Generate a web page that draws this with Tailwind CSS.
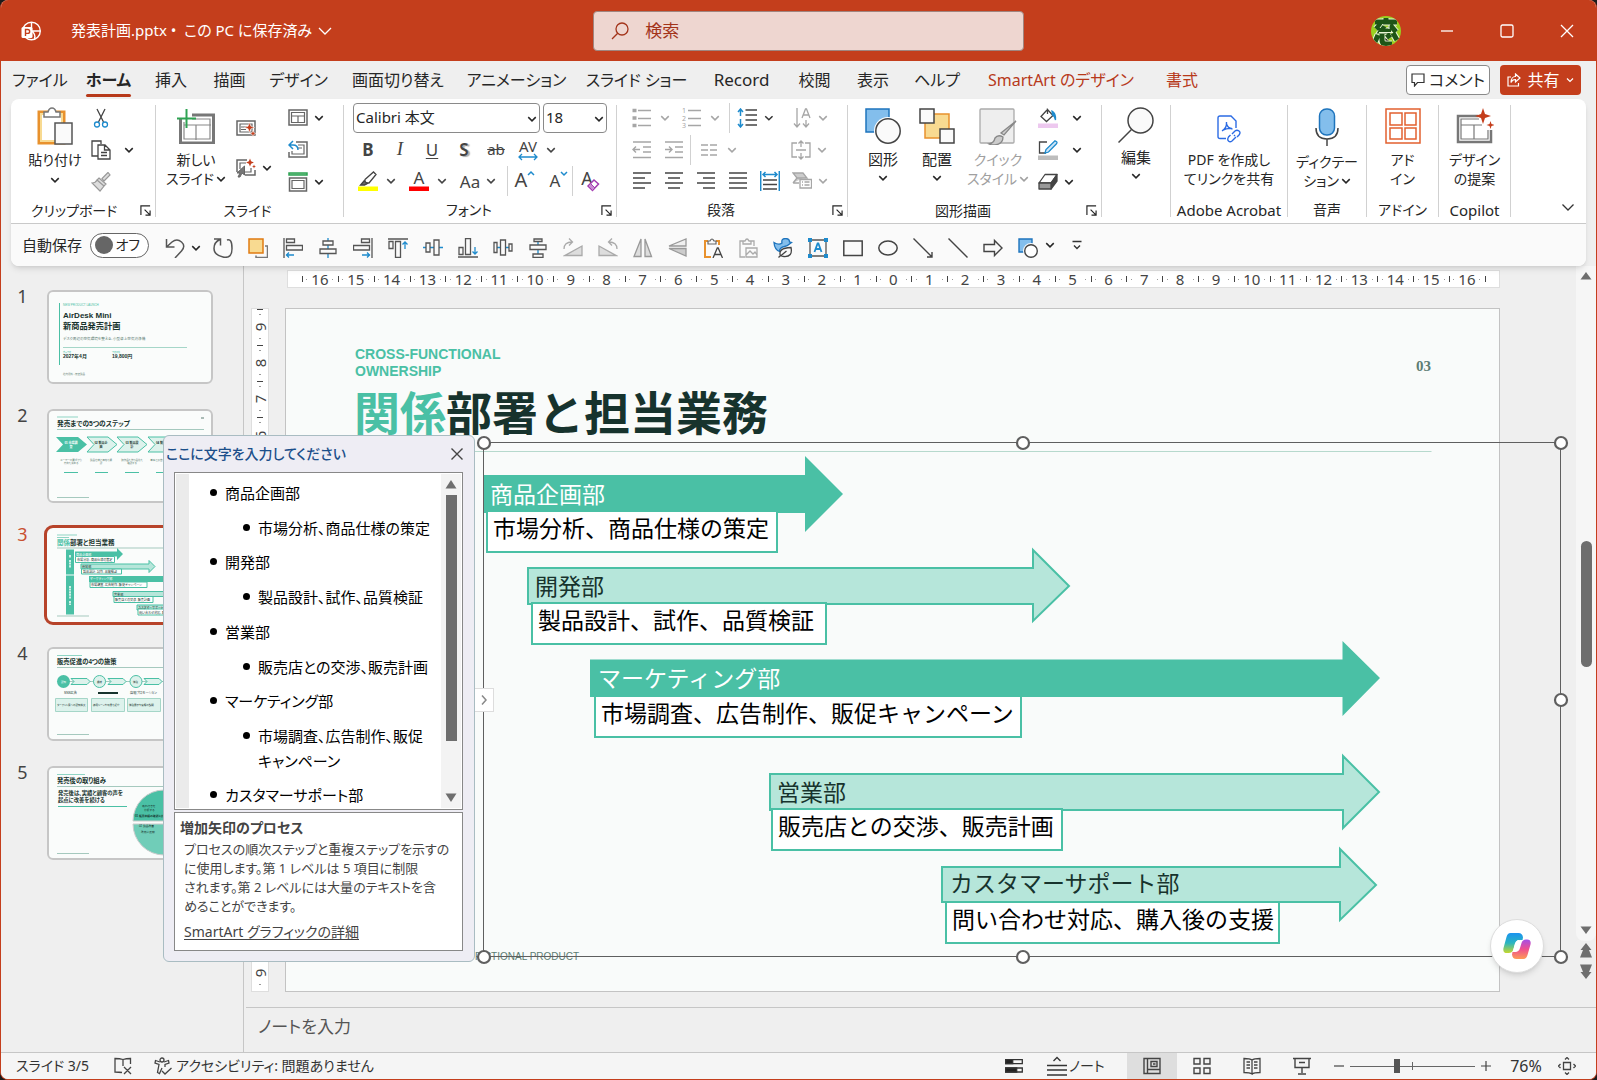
<!DOCTYPE html>
<html lang="ja">
<head>
<meta charset="utf-8">
<title>発表計画.pptx - PowerPoint</title>
<script src="https://cdn.jsdelivr.net/npm/@tailwindcss/browser@4"></script>
</head>
<body class="h-screen overflow-hidden bg-[#1b1b1b] font-['Noto_Sans','Noto_Sans_CJK_JP',sans-serif] text-[15px] text-[#262626] [font-feature-settings:'palt']">

<svg class="hidden">
  <symbol id="chev" viewBox="0 0 8 8"><path d="M1 2.500 4 5.500 7 2.500" fill="none" stroke="currentColor" stroke-width="1.2"/></symbol>
  <symbol id="launch" viewBox="0 0 12 12"><path d="M1 11V1h10M5 5l5.500 5.500M11 6v5H6" fill="none" stroke="currentColor" stroke-width="1.3"/></symbol>
</svg>

<div class="flex h-full flex-col overflow-hidden rounded-lg border-x border-b border-[#c43e1c] bg-[#efefef]">

  <!-- Title bar -->
  <header class="flex h-[61px] shrink-0 items-center bg-[#c43e1c] text-white">
    <div class="flex w-[37%] shrink-0 items-center">
      <svg class="ml-5 size-5" viewBox="0 0 20 20" fill="none" stroke="#fff" stroke-width="1.4"><circle cx="10.500" cy="10" r="8.800"/><path d="M10.500 1.200v8.800h8.800M10.500 10c3 2 4 5 3 8"/><rect x="0.500" y="6" width="11" height="11" rx="1.500" fill="#fff" stroke="none"/><path d="M4.500 15V8.500h2.200a1.900 1.900 0 0 1 0 3.900H4.500" stroke="#c43e1c"/></svg>
      <button class="ml-[30px] flex items-center gap-1.5 whitespace-nowrap">発表計画.pptx&nbsp;•&nbsp; この PC に保存済み
        <svg class="h-3 w-3.5" viewBox="0 0 14 12" fill="none" stroke="#fff" stroke-width="1.300"><path d="M1 3l6 6 6-6"/></svg></button>
    </div>
    <label class="ml-0.5 flex h-10 w-[27%] items-center rounded-[4px] border border-[#a0857f] bg-[#eed6d0] pl-[17px]">
      <svg class="size-[18px]" viewBox="0 0 18 18" fill="none" stroke="#a3341a" stroke-width="1.300"><circle cx="11" cy="7" r="6"/><path d="M6.700 11.300 1 17"/></svg>
      <input type="search" aria-label="検索" placeholder="検索" class="ml-4 min-w-0 flex-1 bg-transparent text-[17px] outline-none placeholder:text-[#a3341a]">
    </label>
    <div class="ml-auto flex items-center pr-3.5">
      <svg class="size-[30px]" viewBox="0 0 30 30"><defs><clipPath id="av"><circle cx="15" cy="15" r="15"/></clipPath></defs><g clip-path="url(#av)"><path d="M0 0h30v30H0z" fill="#9ad021"/><path d="M4 6h22M15 2v4M10 8l-5 5M13 10l-3 5h10M19 9l6 7M7 19l-3 7M11 18v6q0 4 4 4h6M16 18l3 4M22 17l4 7" stroke="#e9f5d6" stroke-width="7"/><path d="M4 6h22M15 2v4M10 8l-5 5M13 10l-3 5h10M19 9l6 7M7 19l-3 7M11 18v6q0 4 4 4h6M16 18l3 4M22 17l4 7" stroke="#1e5517" stroke-width="5" fill="none"/><path d="M8 16.500h14M12 8l-3 4M18 9v4" stroke="#e9f5d6" fill="none"/></g></svg>
      <button aria-label="最小化" class="ml-[31px] flex w-[30px] justify-center"><svg class="size-3.5" viewBox="0 0 14 14" stroke="#fff" stroke-width="1.300"><path d="M1 7h12"/></svg></button>
      <button aria-label="最大化" class="ml-[30px] flex w-[30px] justify-center"><svg class="size-3.5" viewBox="0 0 14 14" fill="none" stroke="#fff" stroke-width="1.300"><rect x="1" y="1" width="12" height="12" rx="1.500"/></svg></button>
      <button aria-label="閉じる" class="ml-[30px] flex w-[30px] justify-center"><svg class="size-3.5" viewBox="0 0 14 14" stroke="#fff" stroke-width="1.300"><path d="M1 1l12 12M13 1 1 13"/></svg></button>
    </div>
  </header>

  <!-- Ribbon tabs -->
  <nav class="flex h-[38px] shrink-0 items-center whitespace-nowrap pl-1 text-base">
    <button class="flex w-[70px] justify-center">ファイル</button>
    <button class="flex w-[67px] justify-center font-bold"><span class="relative">ホーム<span class="absolute inset-x-0 -bottom-[5px] h-[3px] rounded bg-[#b7391a]"></span></span></button>
    <button class="flex w-[58px] justify-center">挿入</button>
    <button class="flex w-[59px] justify-center">描画</button>
    <button class="flex w-[79px] justify-center">デザイン</button>
    <button class="flex w-[120px] justify-center">画面切り替え</button>
    <button class="flex w-[117px] justify-center">アニメーション</button>
    <button class="flex w-[123px] justify-center">スライド ショー</button>
    <button class="flex w-[87px] justify-center text-[17px]">Record</button>
    <button class="flex w-[59px] justify-center">校閲</button>
    <button class="flex w-[58px] justify-center">表示</button>
    <button class="flex w-[70px] justify-center">ヘルプ</button>
    <button class="flex w-[178px] justify-center text-[#b7391a]">SmartArt のデザイン</button>
    <button class="flex w-16 justify-center text-[#b7391a]">書式</button>
    <div class="ml-auto flex gap-2.5 pr-[15px]">
      <button class="flex h-[30px] w-[84px] items-center justify-center gap-1 rounded-[4px] border border-[#8a8a8a] bg-white"><svg class="size-3.5" viewBox="0 0 14 14" fill="none" stroke="#333" stroke-width="1.200"><path d="M1 1h12v8.500H6.500L3.500 13V9.500H1z"/></svg>コメント</button>
      <button class="flex h-[30px] w-[81px] items-center justify-center gap-1.5 rounded-[4px] bg-[#c43e1c] text-white"><svg class="size-3.5" viewBox="0 0 14 14" fill="none" stroke="#fff" stroke-width="1.200"><path d="M4 4H1v9h10.500v-3M8.500 1 13 5 8.500 9V6.500C6 6.500 4.500 8 4 9.500 4 6 6 3.500 8.500 3.500z"/></svg>共有<svg class="size-2"><use href="#chev"/></svg></button>
    </div>
  </nav>

  <!-- Ribbon and quick access toolbar -->
  <section class="relative z-10 mx-2.5 shrink-0 overflow-hidden rounded-lg bg-white shadow-md">
    <div class="flex h-[124px]">

      <div class="flex w-36 shrink-0 flex-col pt-[3px]">
        <div class="flex h-24 pl-[14px]">
          <button class="flex w-[60px] flex-col items-center text-sm whitespace-nowrap leading-[19px]">
            <span class="flex h-12 items-center"><svg class="h-[38px] w-9" viewBox="0 0 36 38" fill="none"><path d="M2 5h25v31H2z" fill="#fff" stroke="#e8912d" stroke-width="3"/><path d="M4 7h21v27H4z" fill="#fff" stroke="#f8da91" stroke-width="2"/><path d="M7 10V5h4q1-4 4-4t4 4h4v5z" fill="#fff" stroke="#777" stroke-width="1.500"/><path d="M18 16h17v21H18z" fill="#fafafa" stroke="#555" stroke-width="1.500"/></svg></span>
            貼り付け<svg class="mt-1.5 size-2.5"><use href="#chev"/></svg></button>
          <div class="w-8">
            <button aria-label="切り取り" class="flex h-8 w-8 items-center justify-center"><svg class="size-5" viewBox="0 0 20 20" fill="none" stroke="#444" stroke-width="1.300"><path d="M6 1l6.500 13M14 1 7.500 14"/><circle cx="6" cy="16.500" r="2.500" stroke="#1e8bcd"/><circle cx="14" cy="16.500" r="2.500" stroke="#1e8bcd"/></svg></button>
            <button aria-label="コピー" class="flex h-8 w-8 items-center justify-center"><svg class="size-5" viewBox="0 0 20 20" fill="#fff" stroke="#444" stroke-width="1.300"><path d="M7 16H1V1h9v3"/><path d="M7 5h7l5 5v9H7zM13.500 5v5H19M10 12.500h6M10 15.500h6"/></svg></button>
            <button aria-label="書式のコピー/貼り付け" class="flex h-8 w-8 items-center justify-center"><svg class="size-5" viewBox="0 0 20 20" fill="#ddd" stroke="#999" stroke-width="1.200"><path d="M17 .5 11 6.500l2 2.500L19 3z"/><path d="M8 6l7 6-2 2-7-6zM6 8l7 6-4 5-8-8c2 0 4-1 5-3z"/></svg></button>
          </div>
          <button aria-label="コピーのオプション" class="flex w-6 items-center justify-center"><svg class="size-2.5"><use href="#chev"/></svg></button>
        </div>
        <div class="flex h-[26px] items-center pl-5 text-sm"><span class="w-[82px] text-center whitespace-nowrap">クリップボード</span><button aria-label="クリップボードの詳細" class="ml-auto mr-1"><svg class="size-[11px]"><use href="#launch"/></svg></button></div>
      </div>
      <div class="my-1.5 w-px shrink-0 bg-[#d1d1d1]"></div>

      <div class="flex w-[187px] shrink-0 flex-col pt-[3px]">
        <div class="flex h-24 pl-2.5">
          <button class="flex w-[60px] flex-col items-center text-sm whitespace-nowrap leading-[19px]">
            <span class="flex h-12 items-center"><svg class="h-9 w-[38px]" viewBox="0 0 38 36" fill="none"><path d="M3.500 10V35h33V7H15" fill="#fff" stroke="#777" stroke-width="3"/><path d="M7 17h27M19 17v15M7 14v17h26V11H15" stroke="#888" stroke-width="1.200"/><path d="M9.500 1v19M0 10.500h19" stroke="#2ea353" stroke-width="2"/></svg></span>
            新しい<span class="flex items-center gap-0.5">スライド<svg class="size-2.5"><use href="#chev"/></svg></span></button>
          <div class="ml-1 w-[42px] pt-1.5">
            <button aria-label="デザイナー" class="flex h-10 w-8 items-center justify-center"><svg class="size-5" viewBox="0 0 20 20" fill="none" stroke="#666" stroke-width="1.500"><path d="M1 3h18v14H1z"/><path d="M4 6h12v8H4zM5 9h6M5 11.500h5" stroke-width="1.200"/><path d="M13.500 4.500l1.400 3.700 3.600 1.300-3.600 1.300-1.400 3.700-1.400-3.700-3.600-1.300 3.600-1.300zM17 12.500l.9 2.100 2.100.9-2.100.9-.9 2.100-.9-2.100-2.100-.9 2.100-.9z" fill="#c43e1c" stroke="#fff" stroke-width=".5"/></svg></button>
            <button aria-label="アニメーション候補" class="flex h-10 items-center"><span class="flex w-8 justify-center"><svg class="size-5" viewBox="0 0 20 20" fill="none" stroke="#666" stroke-width="1.500"><path d="M1 14V2h10M9 17h10v-5"/><path d="M4 11V5h6M15 10v4h-6" stroke-width="1.200"/><path d="M8.500 8 1 15h3l-2 4h2l2-4 2.500 2z" fill="#777" stroke-width="1"/><path d="M14 .5l1.100 2.800 2.800 1.200-2.800 1.200L14 8.500l-1.100-2.800-2.800-1.200 2.800-1.200zM18 6.500l.6 1.500L20 8.500l-1.400.6L18 10.500l-.6-1.400-1.400-.6 1.400-.5z" fill="#c43e1c" stroke="none"/></svg></span><svg class="size-2.5"><use href="#chev"/></svg></button>
          </div>
          <div class="ml-2.5">
            <button aria-label="レイアウト" class="flex h-8 items-center"><span class="flex w-8 justify-center"><svg class="size-5" viewBox="0 0 20 20" fill="none" stroke="#666" stroke-width="1.500"><path d="M1 2h18v15H1z"/><path d="M3.500 4.500h13v10h-13zM3.500 8h13M10 8v6.500" stroke-width="1.200"/></svg></span><svg class="size-2.5"><use href="#chev"/></svg></button>
            <button aria-label="リセット" class="flex h-8 w-8 items-center justify-center"><svg class="size-5" viewBox="0 0 20 20" fill="none" stroke="#666" stroke-width="1.500"><path d="M8 2h11v15H1v-5"/><path d="M10 5h6v9H4v-3M10 8h4" stroke-width="1.200"/><path d="M5 1 1 5l4 4M1 5h4c3 0 5 2 5 5" stroke="#1e8bcd"/></svg></button>
            <button aria-label="セクション" class="flex h-8 items-center"><span class="flex w-8 justify-center"><svg class="size-5" viewBox="0 0 20 20" fill="none" stroke="#666" stroke-width="1.500"><path d="M1 1h18v2H1z" stroke="#2ea353" fill="#a5dfb4"/><path d="M1.500 6h17v13h-17z"/><path d="M4 8.500h12v8H4z" stroke-width="1.200"/></svg></span><svg class="size-2.5"><use href="#chev"/></svg></button>
          </div>
        </div>
        <div class="flex h-[26px] items-center justify-center pr-1 text-sm">スライド</div>
      </div>
      <div class="my-1.5 w-px shrink-0 bg-[#d1d1d1]"></div>

      <div class="flex w-[272px] shrink-0 flex-col pt-[3px]">
        <div class="flex h-8 items-center gap-[3px] pl-[9px]">
          <label class="relative"><select aria-label="フォント" class="h-[30px] w-[187px] appearance-none rounded-[4px] border border-[#8a8a8a] bg-white pl-0.5 text-[15px] leading-none"><option>Calibri 本文</option></select><svg class="pointer-events-none absolute top-[11px] right-[3px] size-2.5"><use href="#chev"/></svg></label>
          <label class="relative"><select aria-label="フォント サイズ" class="h-[30px] w-16 appearance-none rounded-[4px] border border-[#8a8a8a] bg-white pl-0.5 text-[15px] leading-none"><option>18</option></select><svg class="pointer-events-none absolute top-[11px] right-[3px] size-2.5"><use href="#chev"/></svg></label>
        </div>
        <div class="flex h-8 items-center pl-2 text-[17px] text-[#444]">
          <button class="w-8 font-bold">B</button>
          <button class="w-8 font-['Liberation_Serif'] text-[19px] italic">I</button>
          <button class="w-8 underline underline-offset-2">U</button>
          <button class="w-8 font-semibold text-shadow-[2px_1px_1px_#aaa]">S</button>
          <button class="w-8 text-[15px] line-through">ab</button>
          <button aria-label="文字の間隔" class="flex w-[46px] items-center"><svg class="w-8 overflow-visible" viewBox="0 0 32 22" fill="none" stroke="#1e8bcd" stroke-width="1.300"><text x="16" y="13" font-size="15" fill="#444" stroke="none" text-anchor="middle">AV</text><path d="M7 18h18M10 15l-3 3 3 3M22 15l3 3-3 3"/></svg><svg class="ml-0.5 size-2.5"><use href="#chev"/></svg></button>
        </div>
        <div class="flex h-8 items-center pl-2 text-[17px] text-[#444]">
          <button aria-label="蛍光ペン" class="flex w-[46px] items-center"><span class="flex w-8 justify-center"><svg class="size-5" viewBox="0 0 20 20" fill="none" stroke="#444" stroke-width="1.300"><path d="M0 15.500h20V20H0z" fill="#ff0" stroke="none"/><path d="M7 8.500 15.500 1 18 3.500 11 12 7 12zM7 9l-2 3 2.500 1.500 3-1.500"/><path d="M6 10l-3.500 4h4L9 12z" fill="#666"/></svg></span><svg class="ml-0.5 size-2.5"><use href="#chev"/></svg></button>
          <button aria-label="フォントの色" class="ml-[5px] flex w-[46px] items-center"><svg class="w-8 overflow-visible" viewBox="0 0 32 20"><text x="16" y="13" font-size="17" fill="#444" text-anchor="middle">A</text><path d="M6 15.500h20V20H6z" fill="red"/></svg><svg class="ml-0.5 size-2.5"><use href="#chev"/></svg></button>
          <button class="ml-[5px] flex w-[45px] items-center"><span class="w-8 text-center">Aa</span><svg class="size-2.5"><use href="#chev"/></svg></button>
          <span class="ml-2 h-[30px] w-px bg-[#d1d1d1]"></span>
          <button aria-label="フォント サイズの拡大" class="w-8"><svg class="w-8 overflow-visible" viewBox="0 0 32 22"><text x="13" y="17" font-size="20" fill="#444" text-anchor="middle">A</text><path d="M20 5l3-3 3 3" fill="none" stroke="#1e8bcd" stroke-width="1.500"/></svg></button>
          <button aria-label="フォント サイズの縮小" class="w-8"><svg class="w-8 overflow-visible" viewBox="0 0 32 22"><text x="15" y="17" font-size="17" fill="#444" text-anchor="middle">A</text><path d="M21 2l3 3 3-3" fill="none" stroke="#1e8bcd" stroke-width="1.500"/></svg></button>
          <span class="h-[30px] w-px bg-[#d1d1d1]"></span>
          <button aria-label="書式のクリア" class="w-8"><svg class="w-8 overflow-visible" viewBox="0 0 32 22"><text x="14" y="15" font-size="18" fill="#444" text-anchor="middle">A</text><path d="M15 16l6-6 4.500 4-6 6.500z" fill="#fff" stroke="#a33bb0" stroke-width="1.500"/><path d="M15 16l2.500-2.500 4.500 4.500-2.500 2.500z" fill="#c98ad2" stroke="#a33bb0"/></svg></button>
        </div>
        <div class="flex h-[26px] items-center text-sm"><span class="w-[250px] text-center">フォント</span><button aria-label="フォントの詳細" class="ml-auto mr-1"><svg class="size-[11px]"><use href="#launch"/></svg></button></div>
      </div>
      <div class="my-1.5 w-px shrink-0 bg-[#d1d1d1]"></div>

      <div class="flex w-[230px] shrink-0 flex-col pt-[3px]">
        <div class="flex h-8 items-center pl-[9px] text-[#a6a6a6]">
          <button aria-label="箇条書き" disabled class="flex w-[46px] items-center"><span class="flex w-8 justify-center"><svg class="size-5" viewBox="0 0 20 20" stroke="currentColor" stroke-width="1.500"><path d="M6 2.500h13M6 10.500h13M6 17.500h13"/><path d="M.5 2.500h4M.5 10h4M.5 17.500h4" stroke-width="3.500"/></svg></span><svg class="ml-0.5 size-2.5"><use href="#chev"/></svg></button>
          <button aria-label="段落番号" disabled class="ml-1 flex w-[46px] items-center"><span class="flex w-8 justify-center"><svg class="size-5 overflow-visible" viewBox="0 0 20 20" stroke="currentColor" stroke-width="1.500"><path d="M6 2.500h13M6 10.500h13M6 17.500h13"/><g font-size="7" stroke="none" fill="currentColor"><text x="0" y="5">1</text><text x="0" y="13">2</text><text x="0" y="20">3</text></g></svg></span><svg class="ml-0.5 size-2.5"><use href="#chev"/></svg></button>
          <span class="ml-[7px] h-[30px] w-px bg-[#d1d1d1]"></span>
          <button aria-label="行間" class="flex w-[44px] items-center text-[#333]"><span class="ml-px flex w-8 justify-center"><svg class="size-5" viewBox="0 0 20 20" fill="none" stroke="#444" stroke-width="1.500"><path d="M8.500 2h11.500M8.500 7h11.500M8.500 12h11.500M8.500 17h11.500"/><path d="M3.500 1v7M1 4l2.500-3L6 4M3.500 11v8M1 16l2.500 3L6 16" stroke="#1e8bcd"/></svg></span><svg class="ml-0.5 size-2.5"><use href="#chev"/></svg></button>
          <button aria-label="文字列の方向" disabled class="ml-3 flex items-center"><span class="flex w-8 justify-center"><svg class="size-5" viewBox="0 0 20 20" fill="none" stroke="currentColor" stroke-width="1.300"><path d="M5 0v18M2 15.500l3 3.500 3-3.500M14 12v6M11 15.500l3 3.500 3-3.500M10 10l3.500-9h1L18 10M11 7h6"/></svg></span><svg class="size-2.5"><use href="#chev"/></svg></button>
        </div>
        <div class="flex h-8 items-center pl-[9px] text-[#a6a6a6]">
          <button aria-label="インデントを減らす" disabled class="flex w-8 justify-center"><svg class="size-5" viewBox="0 0 20 20" fill="none" stroke="currentColor" stroke-width="1.400"><path d="M1 2h18M11 7h8M11 12h8M1 17.500h18M1 9.500h7M4 6.500l-3 3 3 3"/></svg></button>
          <button aria-label="インデントを増やす" disabled class="flex w-8 justify-center"><svg class="size-5" viewBox="0 0 20 20" fill="none" stroke="currentColor" stroke-width="1.400"><path d="M1 2h18M11 7h8M11 12h8M1 17.500h18M1 9.500h7M5 6.500l3 3-3 3"/></svg></button>
          <span class="h-[30px] w-px bg-[#d1d1d1]"></span>
          <button aria-label="段組み" disabled class="flex items-center"><span class="flex w-9 justify-center"><svg class="size-4" viewBox="0 0 16 16" stroke="currentColor" stroke-width="1.500"><path d="M0 3h7M9 3h7M0 8h7M9 8h7M0 13h7M9 13h7"/></svg></span><svg class="size-2.5"><use href="#chev"/></svg></button>
          <button aria-label="文字の配置" disabled class="ml-[48px] flex items-center"><span class="flex w-8 justify-center"><svg class="size-5" viewBox="0 0 20 20" fill="none" stroke="currentColor" stroke-width="1.300"><path d="M6 3H1v14h5M14 3h5v14h-5M5 10h10M10 1v6M7.500 3.500 10 1l2.500 2.500M10 19v-6M7.500 16.500 10 19l2.500-2.500"/></svg></span><svg class="size-2.5"><use href="#chev"/></svg></button>
        </div>
        <div class="flex h-8 items-center pl-[9px] text-[#444]">
          <button aria-label="左揃え" class="flex w-8 justify-center"><svg class="size-5" viewBox="0 0 20 20" stroke="currentColor" stroke-width="1.500"><path d="M1 2h18M1 7h12M1 12h18M1 17h12"/></svg></button>
          <button aria-label="中央揃え" class="flex w-8 justify-center"><svg class="size-5" viewBox="0 0 20 20" stroke="currentColor" stroke-width="1.500"><path d="M1 2h18M4 7h12M1 12h18M4 17h12"/></svg></button>
          <button aria-label="右揃え" class="flex w-8 justify-center"><svg class="size-5" viewBox="0 0 20 20" stroke="currentColor" stroke-width="1.500"><path d="M1 2h18M7 7h12M1 12h18M7 17h12"/></svg></button>
          <button aria-label="両端揃え" class="flex w-8 justify-center"><svg class="size-5" viewBox="0 0 20 20" stroke="currentColor" stroke-width="1.500"><path d="M1 2h18M1 7h18M1 12h18M1 17h18"/></svg></button>
          <button aria-label="均等割り付け" class="flex w-8 justify-center"><svg class="size-5" viewBox="0 0 20 20" fill="none" stroke="currentColor" stroke-width="1.500"><path d="M3 9h14M3 13.500h14M3 18h14"/><path d="M.7 0v20M19.300 0v20M3 3.500h14M5.500 1 3 3.500 5.500 6M14.500 1 17 3.500 14.500 6" stroke="#1e8bcd"/></svg></button>
          <button aria-label="SmartArt に変換" disabled class="flex items-center text-[#a6a6a6]"><span class="flex w-8 justify-center"><svg class="size-5" viewBox="0 0 20 20" fill="#ccc" stroke="currentColor" stroke-width="1.300"><path d="M1 2h10l4 5H5zM1 12l4-5h6M1 12h6"/><path d="M8 8.500h11.500V17H8z" fill="#fff"/><path d="M10 11h1M10 14h1M12.500 11h5M12.500 14h5"/></svg></span><svg class="size-2.5"><use href="#chev"/></svg></button>
        </div>
        <div class="flex h-[26px] items-center text-sm"><span class="w-[208px] text-center">段落</span><button aria-label="段落の詳細" class="ml-auto mr-1"><svg class="size-[11px]"><use href="#launch"/></svg></button></div>
      </div>
      <div class="my-1.5 w-px shrink-0 bg-[#d1d1d1]"></div>

      <div class="flex w-[253px] shrink-0 flex-col pt-[3px]">
        <div class="flex h-24 pl-2">
          <button class="flex w-[54px] flex-col items-center leading-[19px]">
            <span class="flex h-12 items-center"><svg class="size-9" viewBox="0 0 36 36" stroke-width="1.500"><path d="M1 1h23v23H1z" fill="#83beec" stroke="#1e74bd"/><circle cx="23" cy="23" r="14" fill="#fff"/><circle cx="23" cy="23" r="12.200" fill="#fafafa" stroke="#444"/></svg></span>
            図形<svg class="mt-1 size-2.5"><use href="#chev"/></svg></button>
          <button class="flex w-[54px] flex-col items-center leading-[19px]">
            <span class="flex h-12 items-center"><svg class="size-9" viewBox="0 0 36 36" fill="#fafafa" stroke="#444" stroke-width="1.500"><path d="M6 6h24v24H6z" fill="#f8da91" stroke="#e8912d"/><path d="M1 1h14v14H1zM21 21h14v14H21z"/></svg></span>
            配置<svg class="mt-1 size-2.5"><use href="#chev"/></svg></button>
          <button disabled class="flex w-[68px] flex-col items-center text-sm whitespace-nowrap leading-[19px] text-[#a0a0a0]">
            <span class="flex h-12 items-center"><svg class="size-[38px]" viewBox="0 0 38 38" stroke="#aaa" stroke-width="1.300"><rect x="1" y="2" width="34" height="34" rx="1" fill="#eee"/><path d="M37 14 25 28l-3-2zM10 37q5-1 6-6 3-4 8-1 0 7-8 8-4 0-6-1z" fill="#ccc" stroke="#888"/></svg></span>
            クイック<span class="flex items-center gap-0.5">スタイル<svg class="size-2.5"><use href="#chev"/></svg></span></button>
          <div>
            <button aria-label="図形の塗りつぶし" class="flex h-8 items-center"><span class="flex w-8 justify-center"><svg class="size-5" viewBox="0 0 20 20" fill="none" stroke="#444" stroke-width="1.300"><path d="M0 15.500h20V20H0z" fill="#edc8ef" stroke="none"/><path d="M9 2 3 8.500l5.500 5L15 7.500 9.500 1.500V6"/><path d="M14 3q4 2 3.500 9-1-4-3-5z" fill="#1e8bcd" stroke="#1e8bcd"/></svg></span><svg class="ml-2 size-2.5"><use href="#chev"/></svg></button>
            <button aria-label="図形の枠線" class="flex h-8 items-center"><span class="flex w-8 justify-center"><svg class="size-5" viewBox="0 0 20 20" fill="none" stroke="#444" stroke-width="1.300"><path d="M0 15.500h20V20H0z" fill="#bdbdbd" stroke="none"/><path d="M9 2H1.500v11H8"/><path d="M17 .8q3 1 1.500 3L10.500 12 7 13l1-3.500z" stroke="#1e8bcd" fill="#cfe6f8"/></svg></span><svg class="ml-2 size-2.5"><use href="#chev"/></svg></button>
            <button aria-label="図形の効果" class="flex h-8 items-center"><span class="flex w-8 justify-center"><svg class="size-5" viewBox="0 0 20 20" fill="#fff" stroke="#444" stroke-width="1.300" stroke-linejoin="round"><path d="M1 11 7 2.500h12L13 11z"/><path d="M19 2.500V9l-6 8v-6z" fill="#444"/><path d="M1 11h12v6H1z" fill="#999"/></svg></span><svg class="size-2.5"><use href="#chev"/></svg></button>
          </div>
        </div>
        <div class="flex h-[26px] items-center text-sm"><span class="w-[230px] text-center">図形描画</span><button aria-label="図形描画の詳細" class="ml-auto mr-1"><svg class="size-[11px]"><use href="#launch"/></svg></button></div>
      </div>
      <div class="my-1.5 w-px shrink-0 bg-[#d1d1d1]"></div>

      <button class="flex w-[68px] shrink-0 flex-col items-center pt-[3px] leading-[19px]">
        <span class="flex h-[46px] items-center"><svg class="size-9" viewBox="0 0 36 36" fill="#fafafa" stroke="#444" stroke-width="1.500"><circle cx="22.500" cy="13.500" r="12.500"/><path d="M13.500 22.500 .5 35.500"/></svg></span>
        編集<svg class="mt-1 size-2.5"><use href="#chev"/></svg></button>
      <div class="my-1.5 w-px shrink-0 bg-[#d1d1d1]"></div>

      <div class="flex w-[116px] shrink-0 flex-col pt-[3px]">
        <button class="flex h-24 flex-col items-center text-sm whitespace-nowrap leading-[19px]">
          <span class="flex h-12 items-center pt-1.5"><svg class="h-7 w-[25px]" viewBox="0 0 25 28" fill="none" stroke="#2b6be4" stroke-width="1.400"><path d="M9 23.500H3q-2 0-2-2V3q0-2 2-2h11l5 5v7"/><path d="M5 16q5-3 4.500-9M9.500 9q1 4 6 5M6 15q4-2 9-1.500"/><path d="M15 19l3-3q2-1.500 4 0t0 4l-2 2M18 20l-1 1M19 22l-4 4q-2 1.500-3.500 0t0-4l2-2"/></svg></span>
          PDF を作成し<span>てリンクを共有</span></button>
        <div class="flex h-[26px] items-center justify-center text-[15px] whitespace-nowrap">Adobe Acrobat</div>
      </div>
      <div class="my-1.5 w-px shrink-0 bg-[#d1d1d1]"></div>

      <div class="flex w-[78px] shrink-0 flex-col pt-[3px]">
        <button class="flex h-24 flex-col items-center text-sm whitespace-nowrap leading-[19px]">
          <span class="flex h-[50px] items-center"><svg class="h-[38px] w-6" viewBox="0 0 24 38" fill="none" stroke="#444" stroke-width="1.500"><path d="M1 20q0 11 11 11t11-11M12 31v7"/><rect x="4.500" y="1" width="15" height="26" rx="7" fill="#83beec" stroke="#1e74bd"/></svg></span>
          ディクテー<span class="flex items-center gap-0.5">ション<svg class="size-2.5"><use href="#chev"/></svg></span></button>
        <div class="flex h-[26px] items-center justify-center text-sm">音声</div>
      </div>
      <div class="my-1.5 w-px shrink-0 bg-[#d1d1d1]"></div>

      <div class="flex w-[71px] shrink-0 flex-col pt-[3px]">
        <button class="flex h-24 flex-col items-center text-sm leading-[19px]">
          <span class="flex h-12 items-center"><svg class="size-9" viewBox="0 0 36 36" fill="none" stroke="#e2602f" stroke-width="1.500"><path d="M1 1h34v34H1zM5 5h12v12H5zM20 5h11v12H20zM5 20h12v11H5zM20 20h11v11H20z"/></svg></span>
          アド<span>イン</span></button>
        <div class="flex h-[26px] items-center justify-center text-sm">アドイン</div>
      </div>
      <div class="my-1.5 w-px shrink-0 bg-[#d1d1d1]"></div>

      <div class="flex w-[71px] shrink-0 flex-col pt-[3px]">
        <button class="flex h-24 flex-col items-center text-sm leading-[19px]">
          <span class="flex h-12 items-center"><svg class="h-9 w-[38px]" viewBox="0 0 38 36" fill="none" stroke="#777"><path d="M22 8H2v26h33V22" stroke-width="2.500"/><path d="M23 11H5v20h27v-9M5 17h21M18 17v14" stroke-width="1.200"/><path d="M27 0l2 6 6 2-6 2-2 6-2-6-6-2 6-2zM34.500 13l1 3 3 1-3 1-1 3-1-3-3-1 3-1z" fill="#c43e1c" stroke="none"/></svg></span>
          デザイン<span>の提案</span></button>
        <div class="flex h-[26px] items-center justify-center text-[15px]">Copilot</div>
      </div>
      <div class="my-1.5 w-px shrink-0 bg-[#d1d1d1]"></div>
      <button aria-label="リボンを折りたたむ" class="mt-auto mr-3 mb-2.5 ml-auto"><svg class="h-3 w-3" viewBox="0 0 12 12" fill="none" stroke="#333" stroke-width="1.300"><path d="M.5 3.500 6 9l5.500-5.500"/></svg></button>
    </div>

    <div class="flex h-[43px] items-center border-t border-[#c9c9c9] bg-[#fafafa] pl-[11px]">
      <label class="flex items-center gap-2 whitespace-nowrap">自動保存
        <input type="checkbox" class="peer sr-only">
        <span class="flex h-[25px] w-[59px] items-center justify-between rounded-full border border-[#666] bg-white pr-2 pl-1 text-sm"><span class="size-[18px] rounded-full bg-[#666]"></span>オフ</span></label>
      <button aria-label="元に戻す" class="ml-4 flex items-center gap-1.5 pt-[5px]"><svg class="size-5" viewBox="0 0 20 20" fill="none" stroke="#555" stroke-width="1.500"><path d="M1.500 1v8h8M1.500 9 7 4q5-4 9.500 0t0 9L10 20"/></svg><svg class="size-2.5"><use href="#chev"/></svg></button>
      <div class="ml-1 flex pt-[5px] [&>button]:flex [&>button]:w-[35px] [&>button]:justify-center [&_svg]:size-5">
        <button aria-label="やり直し"><svg viewBox="0 0 20 20" fill="none" stroke="#555" stroke-width="1.500"><path d="M1 1h6.500v6.500M7 1.500Q1 4 1 10.500t9 8.500 9-8.500T14 2"/></svg></button>
        <button aria-label="前面へ移動"><svg viewBox="0 0 20 20" fill="none" stroke-width="1.500"><path d="M8 17.500v2h11.500V8H17" stroke="#777"/><path d="M1 1h14v14H1z" fill="#f8da91" stroke="#e07b12"/></svg></button>
        <button aria-label="左揃え"><svg viewBox="0 0 20 20" fill="none" stroke="#555" stroke-width="1.300"><path d="M1 0v20M3.500 1h8v3.500h-8zM3.500 7.500h16v4.500h-16z"/><path d="M3 17h8M6 14.500 3.500 17 6 19.500" stroke="#1e8bcd"/></svg></button>
        <button aria-label="左右中央揃え"><svg viewBox="0 0 20 20" fill="#fafafa" stroke="#555" stroke-width="1.300"><path d="M10 0v20" stroke="#1e8bcd"/><path d="M5 3h10v4H5zM2 11h16v4.500H2z"/></svg></button>
        <button aria-label="右揃え"><svg viewBox="0 0 20 20" fill="none" stroke="#555" stroke-width="1.300"><path d="M19 0v20M8.500 1h8v3.500h-8zM.5 7.500h16V12H.5z"/><path d="M9 17h8M14 14.500l2.500 2.500-2.500 2.500" stroke="#1e8bcd"/></svg></button>
        <button aria-label="上揃え"><svg viewBox="0 0 20 20" fill="none" stroke="#555" stroke-width="1.300"><path d="M0 1h20M1 3.500h4v7H1zM7.500 3.500h5v16h-5z"/><path d="M17 11V4M14.500 6.500 17 4l2.500 2.500" stroke="#1e8bcd"/></svg></button>
        <button aria-label="上下中央揃え"><svg viewBox="0 0 20 20" fill="#fafafa" stroke="#555" stroke-width="1.300"><path d="M0 9.500h20" stroke="#1e8bcd"/><path d="M3 5h4v9H3zM11 2h5v15h-5z"/></svg></button>
        <button aria-label="下揃え"><svg viewBox="0 0 20 20" fill="none" stroke="#555" stroke-width="1.300"><path d="M0 19h20M1 9.500h4v7H1zM7.500 .5h5v16h-5z"/><path d="M17 9v7M14.500 13.500 17 16l2.500-2.500" stroke="#1e8bcd"/></svg></button>
        <button aria-label="左右に整列"><svg viewBox="0 0 20 20" fill="#fafafa" stroke="#555" stroke-width="1.300"><path d="M4 9.500h12" stroke="#1e8bcd"/><path d="M1 4.500h3v10H1zM7.500 2h5v15h-5zM16 6h3v7h-3z"/></svg></button>
        <button aria-label="上下に整列"><svg viewBox="0 0 20 20" fill="#fafafa" stroke="#555" stroke-width="1.300"><path d="M10 1v17" stroke="#1e8bcd"/><path d="M6 1h8v2.500H6zM2 7h16v4.500H2zM5 16h10v3.500H5z"/></svg></button>
        <button disabled aria-label="右へ 90 度回転"><svg viewBox="0 0 20 20" fill="none" stroke="#aaa" stroke-width="1.300"><path d="M19 8v9.500H2z" fill="#ddd"/><path d="M1 11Q1 4 9 4M6 .5 9.500 4 6 7.500"/></svg></button>
        <button disabled aria-label="左へ 90 度回転"><svg viewBox="0 0 20 20" fill="none" stroke="#aaa" stroke-width="1.300"><path d="M1 8v9.500h17z" fill="#ddd"/><path d="M19 11q0-7-8-7M14 .5 10.500 4 14 7.500"/></svg></button>
        <button aria-label="左右反転"><svg viewBox="0 0 20 20" fill="none" stroke="#999" stroke-width="1.300"><path d="M8 1v17.500H1z" fill="#ddd"/><path d="M12 1v17.500h6.500z" fill="#ddd"/></svg></button>
        <button aria-label="上下反転"><svg viewBox="0 0 20 20" fill="none" stroke="#999" stroke-width="1.300"><path d="M18 1v7H1z" fill="#f0f0f0"/><path d="M18 18V10.500H1z" fill="#ccc"/></svg></button>
        <button aria-label="テキストのみ貼り付け"><svg viewBox="0 0 20 20" fill="none" stroke="#e8912d" stroke-width="1.500"><path d="M5 3H2v16h6M13 3h3v4" stroke-width="2"/><path d="M5 6V3h2q2-4 4 0h2v3z" stroke="#666" stroke-width="1.200"/><path d="M10 20l4.300-10h.9L19.500 20M11.500 16.500h6.500" stroke="#444" stroke-width="1.300"/></svg></button>
        <button disabled aria-label="図として貼り付け"><svg viewBox="0 0 20 20" fill="none" stroke="#aaa" stroke-width="1.300"><path d="M5 3H2v16h5M13 3h3v5M5 6V3h2q2-4 4 0h2v3zM8 10h11v9H8zM8 17l4-4 3 3 2-2 2 3"/></svg></button>
        <button aria-label="図の変更"><svg viewBox="0 0 20 20" fill="none" stroke="#1e74bd" stroke-width="1.300"><path d="M1 4.500q5 3 8 .5-1-4.500 3.500-4.500 4 0 4 3.500l2 .5-2 1.500q-2 2-5 2.500-5 1-5 5-5-2-5.500-9z" fill="#83beec"/><path d="M7.500 18q-3-8 10.500-8.500Q20 19 11 18.500q-2 0-3.500-1l-2 2M7.500 18l6-5" fill="#fafafa" stroke="#444"/></svg></button>
        <button aria-label="テキスト ボックス"><svg viewBox="0 0 20 20" fill="none" stroke="#555" stroke-width="1.300"><path d="M2 2h16v16H2z"/><path d="M0 0h4v4H0zM16 0h4v4h-4zM0 16h4v4H0zM16 16h4v4h-4z" fill="#1e8bcd" stroke="none"/><path d="M6.500 14 9.600 5.500h.8L13.500 14M8 11h4.500" stroke="#1e8bcd" stroke-width="1.800"/></svg></button>
        <button aria-label="正方形/長方形"><svg viewBox="0 0 20 20" fill="none" stroke="#444" stroke-width="1.500"><path d="M.8 3h18.400v14.500H.8z"/></svg></button>
        <button aria-label="楕円"><svg viewBox="0 0 20 20" fill="none" stroke="#444" stroke-width="1.500"><ellipse cx="10" cy="10" rx="9.200" ry="7"/></svg></button>
        <button aria-label="矢印"><svg viewBox="0 0 20 20" fill="none" stroke="#444" stroke-width="1.400"><path d="M.5.500 19 19M19 14v5h-5"/></svg></button>
        <button aria-label="線"><svg viewBox="0 0 20 20" fill="none" stroke="#444" stroke-width="1.400"><path d="M.5.500l19 19"/></svg></button>
        <button aria-label="右矢印"><svg viewBox="0 0 20 20" fill="none" stroke="#444" stroke-width="1.400"><path d="M1 6.500h10.500V2.500L19 10l-7.500 7.500v-4H1z"/></svg></button>
        <button aria-label="図形"><svg viewBox="0 0 20 20" stroke-width="1.400"><path d="M1 1h13v13H1z" fill="#83beec" stroke="#1e74bd"/><circle cx="13" cy="13" r="8" fill="#fafafa"/><circle cx="13" cy="13" r="6.300" fill="#fff" stroke="#444"/></svg></button>
      </div>
      <button aria-label="図形のオプション"><svg class="size-2.5"><use href="#chev"/></svg></button>
      <button aria-label="クイック アクセス ツール バーのユーザー設定" class="ml-4"><svg class="size-3" viewBox="0 0 12 12" fill="none" stroke="#333" stroke-width="1.400"><path d="M1.500 2.500h9M3 6.500l3 3 3-3"/></svg></button>
    </div>
  </section>

  <!-- Workspace -->
  <main class="relative flex min-h-0 flex-1">
    <aside class="flex w-[242px] shrink-0 flex-col gap-[25px] pt-6 pl-4 text-lg text-[#444] [&_svg]:h-[94px] [&_svg]:w-[166px] [&_svg]:rounded-md [&_svg]:bg-[#fafcfb]">
      <button class="flex items-start gap-[19px] leading-3"><span class="w-[11px]">1</span>
        <svg class="outline-2 -outline-offset-2 outline-[#c6c6c6]" viewBox="0 0 166 94" font-family="Liberation Sans, Noto Sans CJK JP" fill="#17332d"><path d="M12.500 13v62" stroke="#4ac0a5"/><text x="16" y="15.500" font-size="3" fill="#4ac0a5">NEW PRODUCT LAUNCH</text><text x="16" y="28" font-size="8" font-weight="bold">AirDesk Mini</text><text x="16" y="39" font-size="8.200" font-weight="bold">新商品発売計画</text><text x="16" y="50" font-size="3.600" fill="#5d7d73">デスク周辺の空気環境を整える、小型卓上空気清浄機</text><path d="M16 57.500h124" stroke="#a5d6c8"/><text x="16" y="63" font-size="2" fill="#4ac0a5">発売予定</text><text x="65" y="63" font-size="2" fill="#4ac0a5">予定価格</text><text x="16" y="68" font-size="5" font-weight="bold">2027年4月</text><text x="65" y="68" font-size="5" font-weight="bold">19,800円</text><text x="16" y="84.500" font-size="2.500" fill="#5d7d73">社内資料 / 架空製品</text></svg></button>
      <button class="flex items-start gap-[19px] leading-3"><span class="w-[11px]">2</span>
        <svg class="outline-2 -outline-offset-2 outline-[#c6c6c6]" viewBox="0 0 166 94" font-family="Liberation Sans, Noto Sans CJK JP" fill="#17332d"><path d="M10 8h21" stroke="#8fd5c4"/><text x="10" y="17" font-size="6.700" font-weight="bold">発売までの5つのステップ</text><path d="M154 9h3" stroke="#5d7d73"/><path d="M10 20.500h147M10 88.500h32" stroke="#a5c9be"/><path d="M9 28h22l9 7.500-9 7.500H9l7-7.500z" fill="#4ac0a5"/><path d="M40 28h21l9 7.500-9 7.500H40l7-7.500zM70 28h21l9 7.500-9 7.500H70l7-7.500zM101 28h21l9 7.500-9 7.500h-21l7-7.500z" fill="#ddf2ec" stroke="#4ac0a5"/><g font-size="3" font-weight="bold" text-anchor="middle"><text x="24" y="35" fill="#fff">01 市場調</text><text x="24" y="39" fill="#fff">査</text><text x="54" y="35">02 製品企</text><text x="54" y="39">画</text><text x="85" y="35">03 製品設</text><text x="85" y="39">計</text><text x="114" y="35">04 製造</text></g><g font-size="2.500" fill="#5d7d73" text-anchor="middle"><text x="24" y="52">ユーザーの要望から</text><text x="24" y="55">方向を決める</text><text x="54" y="52">製品仕様と価格を検</text><text x="54" y="55">討</text><text x="85" y="52">試作品を作り品質を</text><text x="85" y="55">確認する</text><text x="113" y="52">量産と広告を準備</text></g><path d="M17 63.500h14M48 63.500h13M78 63.500h14M109 63.500h14" stroke="#4ac0a5"/></svg></button>
      <button aria-current="true" class="flex items-start gap-[19px] leading-3 text-[#c8502f]"><span class="w-[11px]">3</span>
        <svg class="outline-3 outline-[#b7432a]" viewBox="0 0 166 94" font-family="Liberation Sans, Noto Sans CJK JP" fill="#17332d"><path d="M10 7h20M10 9.500h12" stroke="#8fd5c4"/><text x="10" y="17" font-size="6.500" font-weight="bold"><tspan fill="#4ac0a5">関係</tspan>部署と担当業務</text><path d="M10 20h147M10 88h32" stroke="#a5c9be"/><path d="M19 21.500h8v25h-8zM19 47.500h8v39h-8zM28 23.500h42V20l6 6-6 6v-3.500H28zM42 48h90v6H42z" fill="#4ac0a5"/><path d="M23 27v3M23 32v8M23 58v13M23 73v4" stroke="#fff" stroke-width="1.500" stroke-dasharray="2 .6"/><path d="M34 36h68v-3.500l6 6-6 6V41H34zM66 63.500h60v5H66zM90 77h45v5H90z" fill="#b6e6da" stroke="#4ac0a5"/><path d="M28.500 28.500h39v6h-39zM34.500 41h40v5h-40zM43 54h57v5.500H43zM67 68.500h39v6H67zM91 81h40v6H91z" fill="#fff" stroke="#4ac0a5"/><g font-size="3.100"><text x="29" y="27.500" fill="#fff">商品企画部</text><text x="30" y="33">市場分析、商品仕様の策定</text><text x="35" y="40">開発部</text><text x="36" y="45">製品設計、試作、品質検証</text><text x="43" y="52" fill="#fff">マーケティング部</text><text x="44" y="58">市場調査、広告制作、販促キャンペーン</text><text x="67" y="67.500">営業部</text><text x="68" y="73">販売店との交渉、販売計画</text><text x="91" y="80.500">カスタマーサポート部</text><text x="92" y="85.500">問い合わせ対応、購入後の支援</text></g></svg></button>
      <button class="flex items-start gap-[19px] leading-3"><span class="w-[11px]">4</span>
        <svg class="outline-2 -outline-offset-2 outline-[#c6c6c6]" viewBox="0 0 166 94" font-family="Liberation Sans, Noto Sans CJK JP" fill="#17332d"><path d="M10 8.500h25" stroke="#8fd5c4"/><text x="10" y="17" font-size="6.300" font-weight="bold">販売促進の4つの施策</text><path d="M10 20.500h147M10 87.500h32M20 34.500h137" stroke="#a5c9be"/><circle cx="16.500" cy="34.500" r="6.500" fill="#4ac0a5"/><g fill="#ddf2ec" stroke="#4ac0a5"><circle cx="52.500" cy="34.500" r="6"/><circle cx="89" cy="34.500" r="6"/><path d="M24 31.500h16l3 3-3 3H24l3-3zM61 31.500h15l3 3-3 3H61l3-3zM97 31.500h15l3 3-3 3H97l3-3z"/></g><g fill="#ddf2ec" stroke="#a5d6c8"><path d="M8.500 51.500h32v13h-32zM44.500 51.500h33v13h-33zM80.500 51.500h33v13h-33z"/></g><path d="M51 46h20" stroke="#17332d" stroke-width="2"/><g font-size="3.200"><text x="14" y="36" font-size="2.500" fill="#fff">認知</text><text x="50" y="36" font-size="2.500">興味</text><text x="86" y="36" font-size="2.500">体験</text><text x="17" y="47">SNS広告</text><text x="83" y="47">店頭プロモーション</text><text x="10" y="59" font-size="2.500">ターゲット層への認知拡大</text><text x="46" y="59" font-size="2.500">使用シーンや効果を紹介</text><text x="82" y="59" font-size="2.500">体験展示や実機の説明</text></g></svg></button>
      <button class="flex items-start gap-[19px] leading-3"><span class="w-[11px]">5</span>
        <svg class="outline-2 -outline-offset-2 outline-[#c6c6c6]" viewBox="0 0 166 94" font-family="Liberation Sans, Noto Sans CJK JP" fill="#17332d"><path d="M10 8.500h28" stroke="#8fd5c4"/><text x="10" y="17" font-size="6.300" font-weight="bold">発売後の取り組み</text><path d="M10 20.500h147M10 87.500h32" stroke="#a5c9be"/><g font-size="5.300" font-weight="bold"><text x="11" y="29">発売後は、実績と顧客の声を</text><text x="11" y="35.500">起点に改善を続ける</text></g><path d="M11 40.500h69" stroke="#4ac0a5"/><path d="M86 55a31 31 0 0 1 62 0z" fill="#4ac0a5" stroke="#ccc"/><path d="M86 58a31 31 0 0 0 62 0z" fill="#70cdb8" stroke="#ccc"/><g font-size="2.800"><text x="95" y="41">売れ行きを</text><text x="97" y="45">分析する</text><text x="88" y="51" font-weight="bold">01 販売実績の確認と分析</text><text x="92" y="61">02 製品改善</text><text x="94" y="67">改良に反映</text></g></svg></button>
    </aside>

    <div class="flex min-w-0 flex-1 flex-col border-l border-[#c6c6c6]">
      <div class="flex min-h-0 flex-1">
        <div class="flex min-w-0 flex-1 flex-col gap-5 pt-1 pr-[76px] pb-[15px] pl-[7px]">
          <div id="hruler" class="ml-9 flex h-[18px] border border-[#dedede] bg-white px-3.5 text-[15px] leading-4 text-[#444]"></div>
          <div class="flex min-h-0 flex-1 gap-4">
            <div id="vruler" class="flex w-[18px] shrink-0 flex-col border border-[#dedede] bg-white text-[15px] text-[#444]"></div>

            <!-- Slide canvas -->
            <article class="relative min-w-0 flex-1 border border-[#c3c3c3] bg-[#f9fbfa] font-['Liberation_Sans','Noto_Sans_CJK_JP',sans-serif] text-[#17332d] [font-feature-settings:normal]">
              <p class="absolute top-[37px] left-[69px] w-[170px] text-sm leading-[17px] font-bold text-[#4ac0a5]">CROSS-FUNCTIONAL OWNERSHIP</p>
              <h1 class="absolute top-[77px] left-[68px] text-[46px] leading-[56px] font-bold whitespace-nowrap"><span class="text-[#4ac0a5]">関係</span>部署と担当業務</h1>
              <p class="absolute top-[47px] right-[68px] font-['Liberation_Serif'] text-[15px] leading-5 font-bold text-[#5d7d73]">03</p>
              <p class="absolute top-[642px] left-[189px] text-[10px] leading-3 text-[#5d7d73]">FICTIONAL PRODUCT</p>
              <svg class="absolute top-0 left-0 size-full overflow-visible"><g transform="translate(-286 -309)">
                <path d="M354 451.500H1431.500" stroke="#b7d9cd"/>
                <path d="M484 475H805V456L843 494L805 532V513H484z" fill="#4ac0a5"/>
                <path d="M590 659.500H1342.500V641L1380 678L1342.500 716V697H590z" fill="#4ac0a5"/>
                <g fill="#b6e6da" stroke="#4ac0a5" stroke-width="2">
                  <path d="M528 568H1033V550L1069 586L1033 621V604H528z"/>
                  <path d="M770 774H1343V756L1379 792L1343 828V810H770z"/>
                  <path d="M942 867H1340V849L1376 885L1340 920V902H942z"/>
                </g>
              </g></svg>
              <div class="text-[23px] leading-[30px] whitespace-nowrap">
                <p class="absolute top-[171px] left-[204px] text-white">商品企画部</p>
                <p class="absolute top-[263px] left-[249px]">開発部</p>
                <p class="absolute top-[355px] left-[312px] text-white">マーケティング部</p>
                <p class="absolute top-[469px] left-[491px]">営業部</p>
                <p class="absolute top-[560px] left-[664px]">カスタマーサポート部</p>
              </div>
              <div class="text-[23px] leading-[34px] whitespace-nowrap text-black">
                <p class="absolute top-[201px] left-[200px] h-[43px] w-[292px] border-2 border-[#4ac0a5] bg-white pl-[5px]">市場分析、商品仕様の策定</p>
                <p class="absolute top-[293px] left-[245px] h-[43px] w-[296px] border-2 border-[#4ac0a5] bg-white pl-[5px]">製品設計、試作、品質検証</p>
                <p class="absolute top-[386px] left-[308px] h-[43px] w-[428px] border-2 border-[#4ac0a5] bg-white pl-[5px]">市場調査、広告制作、販促キャンペーン</p>
                <p class="absolute top-[499px] left-[485px] h-[43px] w-[292px] border-2 border-[#4ac0a5] bg-white pl-[5px]">販売店との交渉、販売計画</p>
                <p class="absolute top-[592px] left-[659px] h-[43px] w-[335px] border-2 border-[#4ac0a5] bg-white pl-[5px]">問い合わせ対応、購入後の支援</p>
              </div>
              <svg class="absolute top-0 left-0 size-full overflow-visible"><g transform="translate(-286 -309)">
                <path d="M483.500 442.500H1560.500V956.500H483.500z" fill="none" stroke="#5f5f5f"/>
                <g fill="#fff" stroke="#5f5f5f" stroke-width="2.200"><circle cx="484" cy="443" r="6"/><circle cx="1023" cy="443" r="6"/><circle cx="1561" cy="443" r="6"/><circle cx="1561" cy="700" r="6"/><circle cx="484" cy="957" r="6"/><circle cx="1023" cy="957" r="6"/><circle cx="1561" cy="957" r="6"/></g>
              </g></svg>
              <button aria-label="テキスト ウィンドウ" class="absolute top-[379px] left-[188px] flex h-6 w-5 items-center justify-center border border-[#ddd] bg-white"><svg class="size-3" viewBox="0 0 12 12" fill="none" stroke="#888" stroke-width="1.500"><path d="M4 1.500 8 6l-4 4.500"/></svg></button>
              <button aria-label="Copilot" class="absolute -right-[45px] bottom-[18px] flex size-[54px] items-center justify-center rounded-full border border-[#ddd] bg-white shadow-md">
                <svg class="size-7" viewBox="0 0 28 28"><defs><linearGradient id="ga" x1="0" y1="0" x2="0" y2="1"><stop offset="0" stop-color="#1a93f0"/><stop offset=".5" stop-color="#2bb5c0"/><stop offset="1" stop-color="#c6d82c"/></linearGradient><linearGradient id="gb" x1="0" y1="0" x2="0" y2="1"><stop offset="0" stop-color="#a54ee8"/><stop offset=".5" stop-color="#ef4f8f"/><stop offset="1" stop-color="#fd9c55"/></linearGradient></defs><path d="M7.500 1h8q4 0 4.500 4.500L19.500 8H17q-4 0-5 4l-1.500 5q-1 4-5 4H4q-4.500 0-3.500-5L3.500 5q1-4 4-4z" fill="url(#ga)"/><path d="M20.500 27h-7q-4 0-4.500-4.500L9.500 20H12q4 0 5-4l1.500-5q1-3.500 4.500-3.500h1q4.500 0 3.500 5L24.500 23q-1 4-4 4z" fill="url(#gb)"/><path d="M16 8h-1q-2.500 1-3.500 5l-1.500 6 2 1q3-1 4-5z" fill="#fff"/></svg></button>
            </article>
          </div>
        </div>
        <div class="relative mb-[66px] flex w-[20px] shrink-0 flex-col items-center rounded-b-lg bg-[#f6f6f6] text-[#6e6e6e]">
          <svg class="mt-1.5 h-2 w-3" viewBox="0 0 12 8" fill="currentColor"><path d="M6 0l5.500 7.500H.5z"/></svg>
          <div class="mt-[261px] h-[126px] w-[11px] rounded-full bg-[#6e6e6e]"></div>
          <svg class="mt-auto mb-[7px] h-2 w-3" viewBox="0 0 12 8" fill="currentColor"><path d="M6 8 .5.500h11z"/></svg>
          <div class="absolute top-full left-1 flex flex-col gap-1.5 pt-0.5">
            <button aria-label="前のスライド"><svg class="block h-[15px] w-3" viewBox="0 0 12 15" fill="currentColor"><path d="M6 0l5.500 7H9l3 7.500H0L3 7H.5z"/></svg></button>
            <button aria-label="次のスライド"><svg class="block h-[15px] w-3" viewBox="0 0 12 15" fill="currentColor"><path d="M6 15 .5 8H3L0 .5h12L9 8h2.500z"/></svg></button>
          </div>
        </div>
      </div>
      <label class="ml-0.5 block h-[45px] shrink-0 border-t border-[#c6c6c6] pl-3"><textarea aria-label="ノート" placeholder="ノートを入力" class="block h-10 w-full resize-none bg-transparent pt-[5px] text-[17px] leading-7 outline-none placeholder:text-[#555]"></textarea></label>
    </div>

    <!-- SmartArt text pane -->
    <section class="absolute top-[169px] left-[162px] flex h-[527px] w-[312px] flex-col rounded-md border border-[#a9bcc2] bg-[#eeedf4] pr-[11px] pb-2.5 pl-2.5">
      <div class="flex h-9 shrink-0 items-center justify-between">
        <h2 class="-ml-2 text-sm font-medium whitespace-nowrap text-[#1c4f8a]">ここに文字を入力してください</h2>
        <button aria-label="閉じる"><svg class="size-3" viewBox="0 0 12 12" stroke="#444" stroke-width="1.400"><path d="M.5.500l11 11M11.500.500l-11 11"/></svg></button>
      </div>
      <div class="flex h-[338px] shrink-0 border border-[#888] bg-white p-px leading-[25px] text-black">
        <div class="w-[13px] bg-[#ebebeb]"></div>
        <ul class="min-w-0 flex-1 overflow-hidden pt-[7px] pl-[21px] whitespace-nowrap [&>li]:mb-[9px] [&>li]:flex [&_i]:mt-2 [&_i]:mr-2 [&_i]:size-[7px] [&_i]:shrink-0 [&_i]:rounded-full [&_i]:bg-black">
          <li><i></i>商品企画部</li>
          <li class="pt-px pl-[33px]"><i></i>市場分析、商品仕様の策定</li>
          <li><i></i>開発部</li>
          <li class="pt-px pl-[33px]"><i></i>製品設計、試作、品質検証</li>
          <li class="pt-px"><i></i>営業部</li>
          <li class="pt-px pl-[33px]"><i></i>販売店との交渉、販売計画</li>
          <li><i></i>マーケティング部</li>
          <li class="pt-px pl-[33px]"><i></i><span>市場調査、広告制作、販促<br>キャンペーン</span></li>
          <li><i></i>カスタマーサポート部</li>
        </ul>
        <div class="flex w-5 flex-col items-center bg-[#f3f3f3]">
          <svg class="mt-1.5 h-[9px] w-3" viewBox="0 0 12 9" fill="#6e6e6e"><path d="M6 0l5.500 8.500H.5z"/></svg>
          <div class="mt-1.5 h-[246px] w-[11px] bg-[#6e6e6e]"></div>
          <svg class="mt-auto mb-1.5 h-[9px] w-3" viewBox="0 0 12 9" fill="#6e6e6e"><path d="M6 9 .5.500h11z"/></svg>
        </div>
      </div>
      <div class="mt-0.5 min-h-0 flex-1 border border-[#888] bg-white pt-[5px] pl-[5px] text-[#444]">
        <h3 class="text-sm leading-[19px] font-bold">増加矢印のプロセス</h3>
        <p class="mt-[3px] pl-1 text-[13px] leading-[19px] whitespace-nowrap">プロセスの順次ステップと重複ステップを示すの<br>に使用します。第 1 レベルは 5 項目に制限<br>されます。第 2 レベルには大量のテキストを含<br>めることができます。</p>
        <a href="#" class="mt-1.5 ml-1 inline-block text-sm leading-[19px] underline underline-offset-2">SmartArt グラフィックの詳細</a>
      </div>
    </section>
  </main>

  <!-- Status bar -->
  <footer class="flex h-[27px] shrink-0 items-center border-t border-[#c6c6c6] bg-[#f5f5f5] pl-[15px] text-sm whitespace-nowrap text-[#333]">
    <span class="w-[98px]">スライド 3/5</span>
    <button aria-label="スペル チェック"><svg class="size-[18px]" viewBox="0 0 18 18" fill="none" stroke="#444" stroke-width="1.300"><path d="M8 15.500Q6 15 1 15V1.500q5 0 8 1 3-1 7.500-1V7M9 2.500V9M10 10l7 7M17 10l-7 7"/></svg></button>
    <button class="ml-[22px] flex items-center gap-1"><svg class="size-[18px]" viewBox="0 0 18 18" fill="none" stroke="#444" stroke-width="1.300"><circle cx="8" cy="3" r="2"/><path d="M6 5 1.500 3.500 1 6l4 1.500-1.500 8 2 1L8 11M10 5l4.500-1.500L15 6l-4 1.500V10M8 14l3 3 6.500-6"/></svg>アクセシビリティ: 問題ありません</button>
    <div class="ml-auto flex h-full items-center">
      <button aria-label="表示設定"><svg class="h-4 w-[18px]" viewBox="0 0 18 16" fill="none" stroke="#333" stroke-width="1.300"><path d="M.7 1.700h16.600v4H.7zM.7 10h16.600v4H.7z"/><path d="M.7 1.700h7v4h-7zM.7 10h11v4H.7z" fill="#222"/></svg></button>
      <button class="ml-6 flex w-[58px] items-center gap-0.5"><svg class="h-5 w-5 shrink-0" viewBox="0 0 20 20" fill="none" stroke="#333" stroke-width="1.300"><path d="M6.500 5 10 1.500 13.500 5M0 9.500h20M0 14h20M0 19h20"/></svg>ノート</button>
      <button aria-label="標準" class="ml-[22px] flex h-full w-[50px] items-center justify-center bg-[#dedede]"><svg class="size-[18px]" viewBox="0 0 18 18" fill="none" stroke="#444" stroke-width="1.400"><path d="M1 1.500h16v15H1zM4.500 1.500v15M4.500 12.500H17M8 4.500h6v5H8zM10 7h2.500"/></svg></button>
      <button aria-label="スライド一覧" class="ml-4"><svg class="size-[18px]" viewBox="0 0 18 18" fill="none" stroke="#444" stroke-width="1.400"><path d="M1 1.500h6v5.500H1zM11 1.500h6v5.500h-6zM1 11h6v5.500H1zM11 11h6v5.500h-6z"/></svg></button>
      <button aria-label="閲覧表示" class="ml-8"><svg class="size-[18px]" viewBox="0 0 18 18" fill="none" stroke="#444" stroke-width="1.300"><path d="M9 3v14Q7 15.500 1 15.500V1.500Q7 1.500 9 3q2-1.500 8-1.500v14q-6 0-8 1.500M3.500 5H7M3.500 8H7M3.500 11H7M11 5h3.500M11 8h3.500M11 11h3.500"/></svg></button>
      <button aria-label="スライド ショー" class="ml-8"><svg class="size-[18px]" viewBox="0 0 18 18" fill="none" stroke="#444" stroke-width="1.400"><path d="M0 1.500h18M2 1.500v9h14v-9M9 10.500V16M5 17h8M6 5.500h6"/></svg></button>
      <button aria-label="縮小" class="ml-[22px]"><svg class="size-3" viewBox="0 0 12 12" stroke="#444" stroke-width="1.200"><path d="M1 6h10"/></svg></button>
      <span class="relative ml-[5px] flex items-center"><span class="absolute left-[62px] h-2 w-px bg-[#666]"></span><input type="range" aria-label="ズーム" min="0" max="100" value="37" class="h-px w-[125px] appearance-none bg-[#666] [&::-webkit-slider-thumb]:h-3.5 [&::-webkit-slider-thumb]:w-1.5 [&::-webkit-slider-thumb]:appearance-none [&::-webkit-slider-thumb]:bg-[#555]"></span>
      <button aria-label="拡大" class="ml-[5px]"><svg class="size-3" viewBox="0 0 12 12" stroke="#444" stroke-width="1.200"><path d="M1 6h10M6 1v10"/></svg></button>
      <button class="ml-4 w-9 text-base">76%</button>
      <button aria-label="ウィンドウに合わせる" class="mr-5 ml-3.5"><svg class="size-[18px]" viewBox="0 0 18 18" fill="none" stroke="#444" stroke-width="1.300"><path d="M5.500 5.500h7v7h-7zM7 2.500l2-2 2 2M7 15.500l2 2 2-2M2.500 7l-2 2 2 2M15.500 7l2 2-2 2"/></svg></button>
    </div>
  </footer>
</div>

<script>
  // Rulers count outward from zero at the centre of the slide.
  const h = document.getElementById('hruler');
  for (let i = -16; i <= 16; i++) {
    const edge = i === 16 ? '<b class="absolute -right-px top-[5px] h-1.5 w-px bg-[#444]"></b>' : '';
    h.insertAdjacentHTML('beforeend', '<span class="relative flex flex-1 items-center justify-between"><b class="h-1.5 w-px bg-[#444]"></b><b class="size-px bg-[#999]"></b><span class="w-[18px] text-center">' + Math.abs(i) + '</span><b class="size-px bg-[#999]"></b><b class="w-px"></b>' + edge + '</span>');
  }
  const v = document.getElementById('vruler');
  for (let i = -9; i <= 9; i++) {
    v.insertAdjacentHTML('beforeend', '<span class="flex min-h-0 flex-1 flex-col items-center justify-between"><b class="h-px w-1.5 bg-[#444]"></b><b class="h-px w-0.5 bg-[#999]"></b><span class="flex size-[14px] -rotate-90 items-center justify-center leading-none">' + Math.abs(i) + '</span><b class="h-px w-0.5 bg-[#999]"></b><b class="h-px"></b></span>');
  }
</script>
</body>
</html>
